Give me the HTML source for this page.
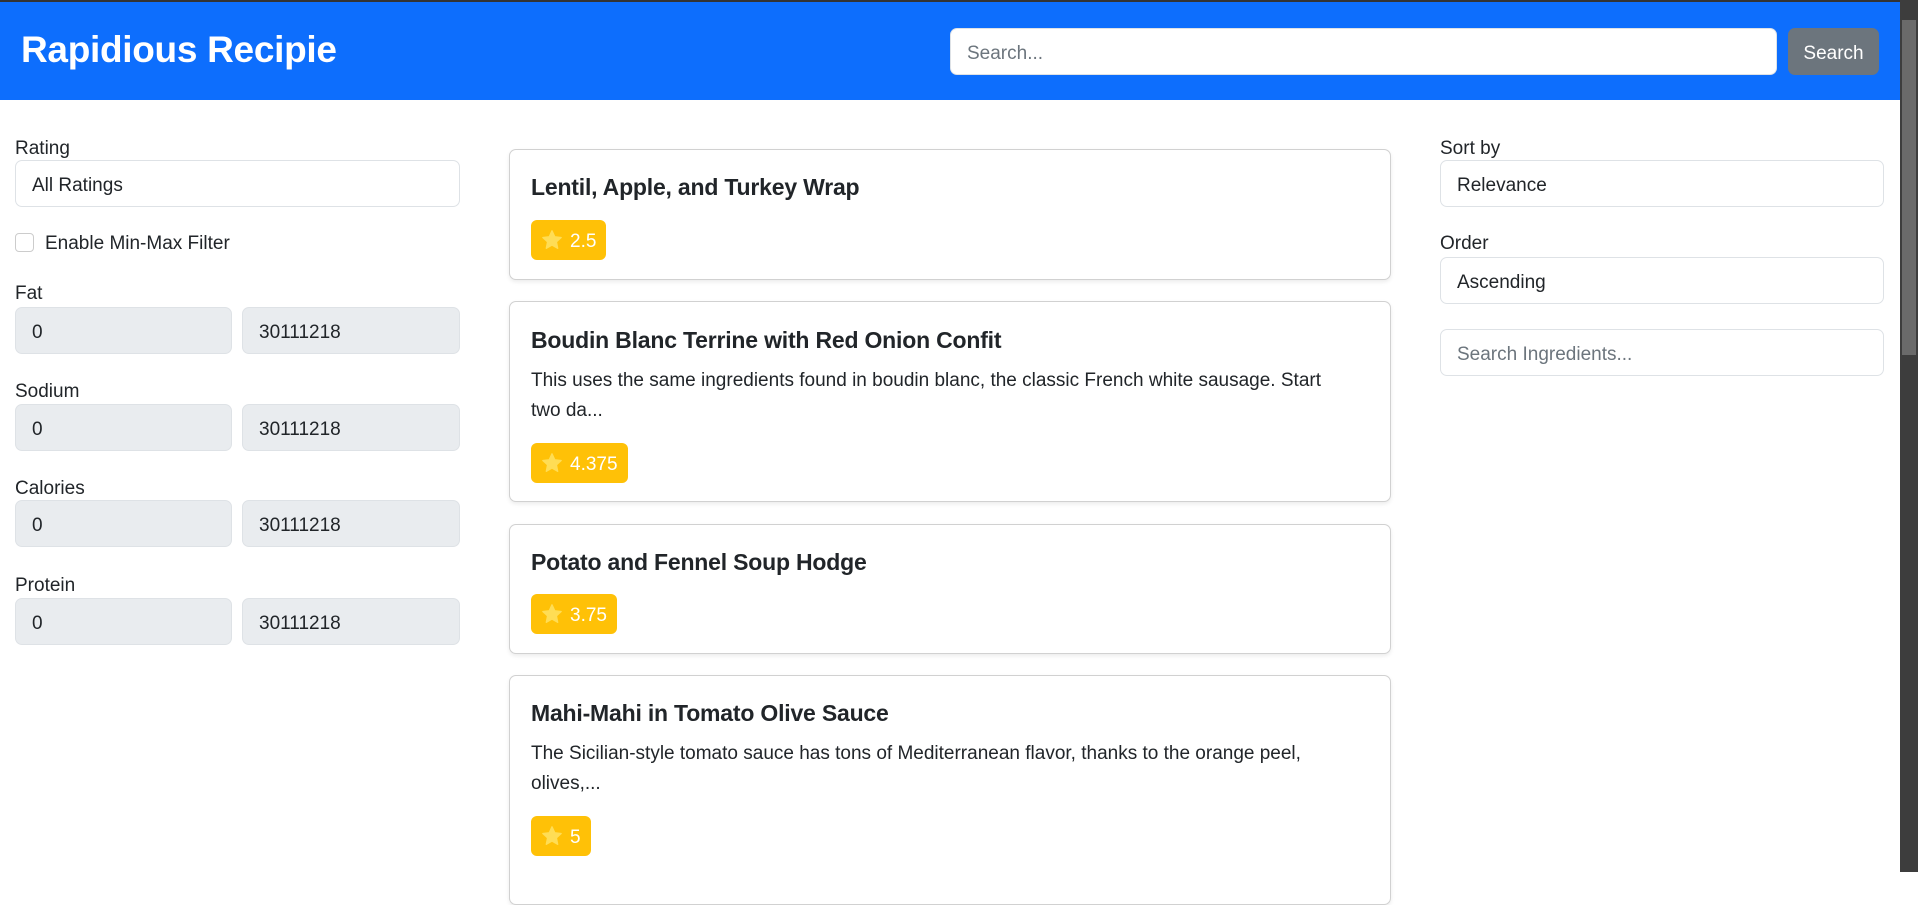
<!DOCTYPE html>
<html><head><meta charset="utf-8"><style>
*{box-sizing:border-box;margin:0;padding:0}
body{width:1918px;height:872px;overflow:hidden;background:#fff;font-family:"Liberation Sans",sans-serif;color:#212529;position:relative;font-size:19px}
.a{position:absolute}
.hdr{left:0;top:0;width:1900px;height:100px;background:#0d6efd;border-top:2px solid #333}
.title{left:21px;top:29px;font-size:37px;color:#fff;font-weight:bold;letter-spacing:-0.3px}
.inp{position:absolute;border:1px solid #dee2e6;border-radius:7px;background:#fff;padding-left:16px;padding-top:4px;display:flex;align-items:center;font-size:19px;color:#212529}
.ph{color:#6c757d}
.dis{background:#e9ecef}
.lbl{position:absolute;font-size:19px;line-height:20px}
.card{position:absolute;left:509px;width:882px;border:1px solid rgba(0,0,0,.18);border-radius:7px;box-shadow:0 2px 4px rgba(0,0,0,.08);background:#fff}
.ct{position:absolute;left:21px;font-size:23px;font-weight:bold;white-space:nowrap;letter-spacing:-0.2px}
.cx{position:absolute;left:21px;font-size:19px;line-height:30px;width:812px}
.bd{position:absolute;left:21px;height:40px;background:#ffc107;border-radius:6px;color:#fff;font-size:19px;display:flex;align-items:center;padding:3px 10px 0}
.bd svg{margin-right:7px;margin-top:-3px}
</style></head><body>
<div class="a hdr"></div>
<div class="a title">Rapidious Recipie</div>
<div class="inp" style="left:950px;top:28px;width:827px;height:47px"><span class="ph">Search...</span></div>
<div class="a" style="left:1788px;top:28px;width:91px;height:47px;background:#6c757d;border-radius:7px;color:#fff;display:flex;align-items:center;justify-content:center;font-size:19px;padding-top:4px">Search</div>
<div class="a" style="left:1900px;top:0;width:18px;height:872px;background:#3d3d3d"></div>
<div class="a" style="left:1902px;top:20px;width:14px;height:335px;background:#6a6a6a"></div>

<div class="lbl" style="left:15px;top:139px">Rating</div>
<div class="inp" style="left:15px;top:160px;width:445px;height:47px">All Ratings</div>
<div class="a" style="left:15px;top:233px;width:19px;height:19px;border:1px solid #ccc;border-radius:4px"></div>
<div class="lbl" style="left:45px;top:234px">Enable Min-Max Filter</div>

<div class="lbl" style="left:15px;top:284px">Fat</div>
<div class="inp dis" style="left:15px;top:307px;width:217px;height:47px">0</div>
<div class="inp dis" style="left:242px;top:307px;width:218px;height:47px">30111218</div>
<div class="lbl" style="left:15px;top:382px">Sodium</div>
<div class="inp dis" style="left:15px;top:404px;width:217px;height:47px">0</div>
<div class="inp dis" style="left:242px;top:404px;width:218px;height:47px">30111218</div>
<div class="lbl" style="left:15px;top:479px">Calories</div>
<div class="inp dis" style="left:15px;top:500px;width:217px;height:47px">0</div>
<div class="inp dis" style="left:242px;top:500px;width:218px;height:47px">30111218</div>
<div class="lbl" style="left:15px;top:576px">Protein</div>
<div class="inp dis" style="left:15px;top:598px;width:217px;height:47px">0</div>
<div class="inp dis" style="left:242px;top:598px;width:218px;height:47px">30111218</div>

<div class="lbl" style="left:1440px;top:139px">Sort by</div>
<div class="inp" style="left:1440px;top:160px;width:444px;height:47px">Relevance</div>
<div class="lbl" style="left:1440px;top:234px">Order</div>
<div class="inp" style="left:1440px;top:257px;width:444px;height:47px">Ascending</div>
<div class="inp" style="left:1440px;top:329px;width:444px;height:47px"><span class="ph">Search Ingredients...</span></div>

<div class="card" style="top:149px;height:131px">
<div class="ct" style="top:24px">Lentil, Apple, and Turkey Wrap</div>
<div class="bd" style="top:70px"><svg width="22" height="22" viewBox="0 0 24 24"><path d="M12 2l3 6.5 7 .8-5.2 4.8 1.4 7L12 17.5 5.8 21l1.4-7L2 9.3l7-.8z" fill="#ffdd55" stroke="#ffdd55" stroke-linejoin="round" stroke-width="1.5"/></svg>2.5</div>
</div>
<div class="card" style="top:301px;height:201px">
<div class="ct" style="top:25px">Boudin Blanc Terrine with Red Onion Confit</div>
<div class="cx" style="top:64px">This uses the same ingredients found in boudin blanc, the classic French white sausage. Start two da...</div>
<div class="bd" style="top:141px"><svg width="22" height="22" viewBox="0 0 24 24"><path d="M12 2l3 6.5 7 .8-5.2 4.8 1.4 7L12 17.5 5.8 21l1.4-7L2 9.3l7-.8z" fill="#ffdd55" stroke="#ffdd55" stroke-linejoin="round" stroke-width="1.5"/></svg>4.375</div>
</div>
<div class="card" style="top:524px;height:130px">
<div class="ct" style="top:24px">Potato and Fennel Soup Hodge</div>
<div class="bd" style="top:69px"><svg width="22" height="22" viewBox="0 0 24 24"><path d="M12 2l3 6.5 7 .8-5.2 4.8 1.4 7L12 17.5 5.8 21l1.4-7L2 9.3l7-.8z" fill="#ffdd55" stroke="#ffdd55" stroke-linejoin="round" stroke-width="1.5"/></svg>3.75</div>
</div>
<div class="card" style="top:675px;height:230px">
<div class="ct" style="top:24px">Mahi-Mahi in Tomato Olive Sauce</div>
<div class="cx" style="top:63px">The Sicilian-style tomato sauce has tons of Mediterranean flavor, thanks to the orange peel, olives,...</div>
<div class="bd" style="top:140px"><svg width="22" height="22" viewBox="0 0 24 24"><path d="M12 2l3 6.5 7 .8-5.2 4.8 1.4 7L12 17.5 5.8 21l1.4-7L2 9.3l7-.8z" fill="#ffdd55" stroke="#ffdd55" stroke-linejoin="round" stroke-width="1.5"/></svg>5</div>
</div>
</body></html>
